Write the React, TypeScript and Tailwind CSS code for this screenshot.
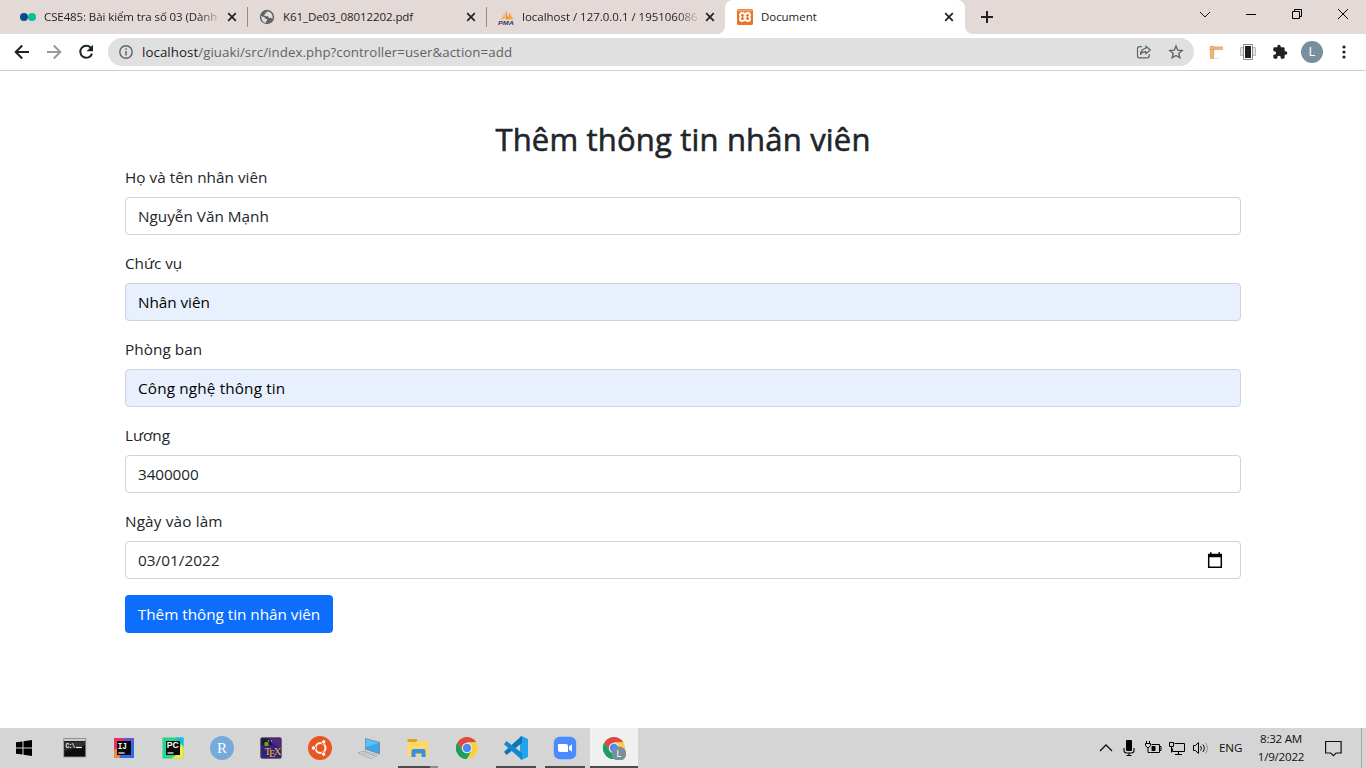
import type { ReactNode } from "react";

const ui = "font-['Open_Sans','Noto_Sans',sans-serif]";

/* ---------- Browser icons ---------- */

function CloseIcon() {
  return (
    <svg width="10" height="10" viewBox="0 0 10 10" className="shrink-0">
      <path d="M1.2 1.2 8.8 8.8M8.8 1.2 1.2 8.8" stroke="#202124" strokeWidth="1.7" />
    </svg>
  );
}

function DotsFavicon() {
  return (
    <svg width="16" height="16" viewBox="0 0 16 16">
      <circle cx="4" cy="8" r="4" fill="#0b4a8f" />
      <circle cx="12" cy="8" r="4" fill="#08bf96" />
    </svg>
  );
}

function GlobeFavicon() {
  return (
    <svg width="16" height="16" viewBox="0 0 16 16">
      <circle cx="8" cy="8" r="7.2" fill="#5f6368" />
      <path d="M2.300 7 5.500 8.200l1 1.500 1.800.6-.3 1.400-1 .8v1.500A6 6 0 0 1 2.300 7ZM8.500 2.200c-.2 1-.8 1.200-1.500 1.400-.8.3-.8.900-.5 1.400L5.300 5.600l.2 1.500 3.300.2 1.400 1.600h1.900l1.400 1A6 6 0 0 0 8.500 2.200Z" fill="#e3dad8" />
    </svg>
  );
}

function PmaFavicon() {
  return (
    <svg width="16" height="16" viewBox="0 0 16 16">
      <path d="M6.500 1.500C6.600 5 5 8.500 1.500 10.500L7 10Z" fill="#f7b267" />
      <path d="M9 .5C7.500 4.500 7.200 7.500 8 10.500l3-.5C9 7 8.500 4 9 .5Z" fill="#f29222" />
      <path d="M11 2c1 3.500 2.500 6 4.500 8L9 10.500C11 8 11.500 5 11 2Z" fill="#f6a13c" />
      <text x="0" y="15.800" textLength="16" lengthAdjust="spacingAndGlyphs" fontFamily="Liberation Sans" fontSize="5.800" fontWeight="700" fontStyle="italic" fill="#34346a">PMA</text>
    </svg>
  );
}

function XamppFavicon() {
  return (
    <svg width="16" height="16" viewBox="0 0 16 16">
      <rect width="16" height="16" rx="1.500" fill="#ec7323" />
      <rect x=".5" y=".5" width="15" height="2" fill="#f2a170" />
      <path d="M8 6.300C7.500 4.600 6.500 4 5.200 4 3.700 4 3 5 3 6.200c0 .8.500 1.300 1 1.800-.6.500-1 1-1 1.900C3 11.200 3.800 12 5.200 12c1.400 0 2.300-.7 2.800-2.200.5 1.500 1.400 2.200 2.800 2.200 1.400 0 2.200-.8 2.200-2.100 0-.9-.4-1.400-1-1.900.5-.5 1-1 1-1.800C13 5 12.300 4 10.800 4 9.500 4 8.500 4.600 8 6.300ZM6.300 8h3.400" fill="none" stroke="#fff" strokeWidth="1.900" strokeLinejoin="round" />
    </svg>
  );
}

/* ---------- Tabs ---------- */

function Tab({ icon, title, spacing, active = false }: { icon: ReactNode; title: string; spacing: string; active?: boolean }) {
  return (
    <div
      className={
        active
          ? "relative flex h-[34px] w-[240px] shrink-0 items-center rounded-t-[8px] bg-white pr-[11px] pl-3"
          : "flex h-[34px] w-[239px] shrink-0 items-center pr-[10px] pl-3"
      }
    >
      {icon}
      <div
        className={`ml-2 w-[176px] text-[11.5px] leading-4 whitespace-nowrap text-[#1d1d1f] ${spacing} ${
          title.length > 22 ? "[mask-image:linear-gradient(to_right,black_155px,transparent_178px)]" : ""
        }`}
      >
        {title}
      </div>
      <div className="ml-auto flex w-[10px]">
        <CloseIcon />
      </div>
      {active && (
        <>
          <svg width="8" height="8" className="absolute bottom-0 -left-2">
            <path d="M8 0v8H0a8 8 0 0 0 8-8Z" fill="#fff" />
          </svg>
          <svg width="8" height="8" className="absolute -right-2 bottom-0">
            <path d="M0 0v8h8a8 8 0 0 1-8-8Z" fill="#fff" />
          </svg>
        </>
      )}
    </div>
  );
}

function Separator() {
  return <div className="-mr-px h-5 w-px shrink-0 bg-[#918c8b]" />;
}

function TabStrip() {
  return (
    <div className="flex h-[34px] items-center bg-[#e3dad8] pl-2">
      <Tab icon={<DotsFavicon />} title="CSE485: Bài kiểm tra số 03 (Dành" spacing="tracking-[-0.100px]" />
      <Separator />
      <Tab icon={<GlobeFavicon />} title="K61_De03_08012202.pdf" spacing="tracking-[-0.080px]" />
      <Separator />
      <Tab icon={<PmaFavicon />} title="localhost / 127.0.0.1 / 195106086" spacing="tracking-[-0.020px]" />
      <Tab icon={<XamppFavicon />} title="Document" spacing="tracking-[-0.050px]" active />
      <svg width="12" height="12" viewBox="0 0 12 12" className="ml-4">
        <path d="M6 0v12M0 6h12" stroke="#202124" strokeWidth="2" />
      </svg>
      <div className="mb-[6px] ml-auto flex items-center">
        <svg width="46" height="28" viewBox="0 0 46 28" fill="none" stroke="#111">
          <path d="m18 12 5 5 5-5" />
        </svg>
        <svg width="46" height="28" viewBox="0 0 46 28" fill="none" stroke="#000">
          <path d="M18 14.500h10" />
        </svg>
        <svg width="46" height="28" viewBox="0 0 46 28" fill="none" stroke="#000">
          <path d="M18.500 11.500h7v7h-7zM20.500 11.500v-2h7v7h-2" />
        </svg>
        <svg width="46" height="28" viewBox="0 0 46 28" fill="none" stroke="#000">
          <path d="m18 9 10 10m0-10L18 19" />
        </svg>
      </div>
    </div>
  );
}

/* ---------- Toolbar ---------- */

function Toolbar() {
  return (
    <div className="flex h-[37px] items-center border-b border-[#cdcdcd] bg-white pl-[14px]">
      <svg width="16" height="16" viewBox="0 0 16 16" fill="none" stroke="#202124" strokeWidth="2">
        <path d="M15 8H2.500M8.200 1.500 1.700 8l6.500 6.500" />
      </svg>
      <svg width="16" height="16" viewBox="0 0 16 16" fill="none" stroke="#9a9a9c" strokeWidth="2" className="ml-4">
        <path d="M1 8h12.500M7.800 1.500 14.300 8l-6.500 6.500" />
      </svg>
      <svg width="16" height="16" viewBox="0 0 16 16" className="ml-4">
        <path d="M13.200 4.300A6 6 0 1 0 14 9.600" fill="none" stroke="#202124" strokeWidth="2" />
        <path d="M15 .8v6.400H8.600Z" fill="#202124" />
      </svg>
      <div className="ml-[14px] flex h-7 w-[1086px] items-center rounded-full bg-[#e0e0e0] pr-[10px] pl-[11px]">
        <svg width="14" height="14" viewBox="0 0 14 14" fill="none" stroke="#5f6368">
          <circle cx="7" cy="7" r="6.200" strokeWidth="1.400" />
          <path d="M7 6v4.500M7 3.300v1.500" strokeWidth="1.500" />
        </svg>
        <div className="ml-[9px] text-[13.300px] leading-5 tracking-[0.055px] text-[#5f6368]">
          <span className="text-[#202124]">localhost</span>/giuaki/src/index.php?controller=user&amp;action=add
        </div>
        <svg width="16" height="16" viewBox="0 0 16 16" fill="none" stroke="#5f6368" strokeWidth="1.200" strokeLinejoin="round" className="ml-auto">
          <path d="M6 2.700H3.500a2 2 0 0 0-2 2v7.100a2 2 0 0 0 2 2h7.800a2 2 0 0 0 2-2v-1.500" />
          <path d="M9.800 2.200 14.400 6l-4.600 3.800V7.700C7.400 7.600 5.700 8.500 4.500 10.500c.2-3.400 2-5.700 5.300-6.200Z" />
        </svg>
        <svg width="16" height="16" viewBox="0 0 16 16" fill="none" stroke="#5f6368" strokeWidth="1.400" className="ml-4">
          <path d="m8 2.100 1.700 4.100 4.400.4-3.300 2.900 1 4.300L8 11.500l-3.800 2.300 1-4.300-3.300-2.900 4.400-.4Z" />
        </svg>
      </div>
      <svg width="16" height="16" viewBox="0 0 16 16" className="ml-[14px]">
        <path d="M2.300 3.500h3.400v11H2.300z" fill="#f3b56e" stroke="#d89550" strokeWidth=".6" />
        <path d="M2.500 2.900h12v2.600h-12z" fill="#f3b878" stroke="#d89550" strokeWidth=".6" />
        <circle cx="4" cy="4" r="1.900" fill="#f9c991" stroke="#d08b45" strokeWidth=".7" />
        <path d="M5.800 14.500h5" stroke="#ddd" />
      </svg>
      <svg width="16" height="16" viewBox="0 0 16 16" className="ml-4">
        <path d="M.5 3.500h15v8H.5z" fill="#e7e7e7" stroke="#bdbdbd" />
        <path d="M3.500.5h9v15h-9z" fill="#fff" stroke="#8a8a8a" />
        <path d="M5 2h6v12H5z" fill="#1a1f2a" />
      </svg>
      <svg width="16" height="16" viewBox="0 0 24 24" className="ml-4" fill="#202124">
        <path d="M20.500 11H19V7a2 2 0 0 0-2-2h-4V3.500a2.500 2.500 0 0 0-5 0V5H4a2 2 0 0 0-2 2v3.800h1.500a2.700 2.700 0 0 1 0 5.400H2V20a2 2 0 0 0 2 2h3.800v-1.500a2.700 2.700 0 0 1 5.400 0V22H17a2 2 0 0 0 2-2v-4h1.500a2.500 2.500 0 0 0 0-5Z" />
      </svg>
      <div className="ml-[13px] flex size-[22px] items-center justify-center rounded-full bg-[#78909c] font-[Roboto,sans-serif] text-[12px] leading-none text-white">L</div>
      <svg width="4" height="14" viewBox="0 0 4 14" fill="#202124" className="ml-[19px]">
        <circle cx="2" cy="2" r="1.600" />
        <circle cx="2" cy="7" r="1.600" />
        <circle cx="2" cy="12" r="1.600" />
      </svg>
    </div>
  );
}

/* ---------- Form ---------- */

type FieldProps = {
  label: string;
  labelSpacing: string;
  value: string;
  spacing: string;
  filled?: boolean;
  date?: boolean;
};

function Field({ label, labelSpacing, value, spacing, filled = false, date = false }: FieldProps) {
  return (
    <div className="mb-4">
      <label className={`mb-2 block h-6 text-[15.300px] leading-6 ${labelSpacing}`}>{label}</label>
      <div
        className={`flex h-[38px] items-center justify-between rounded border border-[#ced4da] px-3 text-[15.300px] leading-6 ${
          filled ? "bg-[#e8f0fe] text-black" : "bg-white"
        }`}
      >
        <span className={spacing}>{value}</span>
        {date && (
          <svg width="16" height="18" viewBox="0 0 16 18" className="mr-[5px]">
            <path d="M1.700 3.500h12.600v12.800H1.700z" fill="none" stroke="#000" strokeWidth="1.500" />
            <path d="M1 3h14v3.200H1zM3 1.300h1.500v2H3zM11.500 1.300H13v2h-1.500z" fill="#000" />
          </svg>
        )}
      </div>
    </div>
  );
}

function Page() {
  return (
    <main className="flex-1 bg-white px-[125px] pt-12 text-[#212529]">
      <h1 className="mb-2 h-[38.400px] pt-px text-center text-[31px] leading-[38.400px] font-medium tracking-[0.180px] [-webkit-text-stroke:0.600px_#212529]">
        Thêm thông tin nhân viên
      </h1>
      <Field label="Họ và tên nhân viên" labelSpacing="tracking-[0.020px]" value="Nguyễn Văn Mạnh" spacing="tracking-[0px]" />
      <Field label="Chức vụ" labelSpacing="tracking-[-0.050px]" value="Nhân viên" spacing="tracking-[-0.050px]" filled />
      <Field label="Phòng ban" labelSpacing="tracking-[0.060px]" value="Công nghệ thông tin" spacing="tracking-[0.150px]" filled />
      <Field label="Lương" labelSpacing="tracking-[-0.050px]" value="3400000" spacing="tracking-[-0.100px]" />
      <Field label="Ngày vào làm" labelSpacing="tracking-[0.150px]" value="03/01/2022" spacing="tracking-[0.050px]" date />
      <button className="flex h-[38px] w-[208px] items-center justify-center rounded bg-[#0d6efd] text-[15.300px] leading-6 tracking-[-0.030px] whitespace-nowrap text-white">
        Thêm thông tin nhân viên
      </button>
    </main>
  );
}

/* ---------- Taskbar ---------- */

function ChromeLogo() {
  return (
    <>
      <circle cx="12" cy="12" r="11" fill="#fff" />
      <path d="M12 12 2.470 6.500A11 11 0 0 1 21.530 6.500L12 6.500Z" fill="#dd4b3e" />
      <path d="M2.470 6.500A11 11 0 0 0 12 23L16.760 14.750 12 12 7.240 14.750Z" fill="#1da05e" />
      <path d="M2.470 6.500 7.240 14.750 12 12V6.500Z" fill="#dd4b3e" />
      <path d="M2.470 6.500 7.240 14.750 8 17 12 23A11 11 0 0 1 2.470 6.500Z" fill="#1da05e" />
      <path d="M21.530 6.500A11 11 0 0 1 12 23l4.760-8.250L12 6.500Z" fill="#ffcd41" />
      <circle cx="12" cy="12" r="5.200" fill="#f1f1f1" />
      <circle cx="12" cy="12" r="4.200" fill="#4a8af4" />
    </>
  );
}

function Slot({ children, state = "idle" }: { children: ReactNode; state?: "idle" | "open" | "multi" | "active" }) {
  return (
    <div className="flex h-10 w-[49px] shrink-0 flex-col items-center">
      <div className={`flex h-[38px] w-12 items-center justify-center pt-[2px] ${state === "active" ? "bg-[#f0f0f0]" : ""}`}>
        <svg width="24" height="24" viewBox="0 0 24 24">
          {children}
        </svg>
      </div>
      {state === "open" && <div className="h-[2px] w-10 bg-[#4b4b4b]" />}
      {state === "active" && <div className="h-[2px] w-12 bg-[#4b4b4b]" />}
      {state === "multi" && (
        <div className="flex h-[2px] w-10">
          <div className="w-8 bg-[#4b4b4b]" />
          <div className="w-2 bg-[#8c8c8c]" />
        </div>
      )}
    </div>
  );
}

function Taskbar() {
  return (
    <footer className="flex h-10 shrink-0 bg-[#d5d5d5] pl-px">
      <Slot>
        <path d="M2 6.300 8.500 5.400v6.100H2zM9.500 5.200 18 4v7.500H9.500zM2 12.500h6.500v6.100L2 17.700zM9.500 12.500H18V20l-8.500-1.200z" fill="#000" />
      </Slot>
      <Slot>
        <rect x=".8" y="2.500" width="22" height="18.500" fill="#0c0c0c" stroke="#9a9a9a" strokeWidth=".8" />
        <path d="M1 3h21.500v2H1z" fill="#c7ccd0" />
        <path d="M1.500 5.500h20.500v4L1.500 15z" fill="#303030" />
        <text x="2.500" y="11.500" textLength="10" fontFamily="Liberation Mono" fontSize="6.500" fontWeight="700" fill="#eee">C:\</text>
        <path d="M13 11.500h6" stroke="#eee" strokeWidth="1.200" />
      </Slot>
      <Slot>
        <path d="M2 2h20v20H2z" fill="#286cf0" />
        <path d="M2 2h10L8 22H2z" fill="#f22b65" />
        <path d="m2 14 4-2 2 10H2z" fill="#f08a3c" />
        <path d="M12 2h10v5L12 8z" fill="#6557d9" />
        <path d="M5 5h14v14H5z" fill="#090909" />
        <text x="5.700" y="12.500" textLength="9" lengthAdjust="spacingAndGlyphs" fontFamily="Liberation Mono" fontSize="9" fontWeight="700" fill="#fff">IJ</text>
        <path d="M6.500 17h6" stroke="#fff" strokeWidth="1.200" />
      </Slot>
      <Slot>
        <path d="M1.500 1.500h21v21h-21z" fill="#21d789" />
        <path d="M15 1.500h7.500v8L17 7z" fill="#13bde3" />
        <path d="M20 7.500 22.500 12v10.500H10L17 18z" fill="#f1ed3c" />
        <path d="M5 5h14v14H5z" fill="#090909" />
        <text x="5.700" y="12.300" textLength="12" lengthAdjust="spacingAndGlyphs" fontFamily="Liberation Sans" fontSize="9" fontWeight="700" fill="#fff">PC</text>
        <path d="M6.500 17h6" stroke="#fff" strokeWidth="1.200" />
      </Slot>
      <Slot>
        <circle cx="12" cy="12" r="12" fill="#75aadb" />
        <text x="12" y="17" textAnchor="middle" fontFamily="Liberation Serif" fontSize="15" fill="#fff">R</text>
      </Slot>
      <Slot>
        <rect x="1.800" y="1.800" width="20.400" height="20.400" rx="1" fill="#302080" stroke="#53455f" />
        <path d="M8 2.500h13.500V12L15 8Z" fill="#4e2a78" />
        <path d="M2.500 3h8l3 6h-11z" fill="#191a28" />
        <circle cx="7.500" cy="8" r="2.300" fill="#779e1b" />
        <path d="m9 4 .8 1.500M12 5h1" stroke="#ddd" />
        <g fontFamily="Liberation Serif" fontSize="10.500" fill="#e9bd2d">
          <text x="5.500" y="18.500">T</text>
          <text x="10" y="21">E</text>
          <text x="14.700" y="18.500">X</text>
        </g>
      </Slot>
      <Slot>
        <circle cx="12" cy="12" r="12" fill="#e95420" />
        <circle cx="12.500" cy="12" r="5" fill="none" stroke="#fff" strokeWidth="2" />
        <g fill="#fff" stroke="#e95420" strokeWidth=".9">
          <circle cx="5.500" cy="12" r="2.200" />
          <circle cx="15.700" cy="5.900" r="2.200" />
          <circle cx="15.700" cy="18.100" r="2.200" />
        </g>
      </Slot>
      <Slot>
        <path d="m8 2 15 4v12.500L8 13.500Z" fill="#7b8b96" />
        <path d="m8.800 3 13.200 3.700v10.400L8.800 12.800Z" fill="#39a9ed" />
        <path d="m8.800 3 13.200 3.700L8.800 11Z" fill="#5dc0f8" />
        <path d="m1 17 5.500-2L20 19.500l-6 3Z" fill="#dfe5e8" stroke="#8e9ba3" strokeWidth=".7" />
        <path d="m3.500 16.800 11 4m-8.500-5 11 4M9 15.500l-4 2m7-1-4 2m7-1-4 2m7-1-4 2" stroke="#9ba8b0" strokeWidth=".6" />
      </Slot>
      <Slot state="multi">
        <path d="M1.500 4.500A1.500 1.500 0 0 1 3 3h7.500l2 2H21a1.500 1.500 0 0 1 1.500 1.500V20h-21z" fill="#ffd76b" />
        <path d="M1.500 4.500A1.500 1.500 0 0 1 3 3h7.500l1 2-2 1h-8z" fill="#dda022" />
        <path d="M5.500 21v-6a2 2 0 0 1 2-2h10a2 2 0 0 1 2 2v6h-4v-3.500h-6V21z" fill="#3294dc" />
      </Slot>
      <Slot>
        <ChromeLogo />
      </Slot>
      <Slot state="open">
        <path d="M17.500 0 24 3v18l-6.500 3L16 22.500v-21Z" fill="#22a4eb" />
        <path d="M17.500 0 0 15.800 2.500 19 18 7V1Z" fill="#0876b9" />
        <path d="M0 8.200 2.500 5 18 17v6.500h-.5Z" fill="#1288cf" />
      </Slot>
      <Slot state="open">
        <rect x=".8" y=".8" width="22.400" height="22.400" rx="6" fill="#4a8cff" />
        <path d="M5 8h8a2 2 0 0 1 2 2v6H7a2 2 0 0 1-2-2zM16 10.500 19 8.300v7.400l-3-2.200z" fill="#fff" />
      </Slot>
      <Slot state="active">
        <ChromeLogo />
        <circle cx="17" cy="17.700" r="7.300" fill="#78909c" />
        <text x="17" y="21" textAnchor="middle" fontFamily="Roboto" fontSize="9" fill="#fff">L</text>
      </Slot>

      <div className="ml-auto flex items-center text-[#111]">
        <svg width="14" height="20" viewBox="0 0 14 20" fill="none" stroke="#111" strokeWidth="1.300">
          <path d="m1 13 6-6 6 6" />
        </svg>
        <svg width="12" height="20" viewBox="0 0 12 20" className="ml-[10px]">
          <rect x="3" y="2" width="6" height="11" rx="1" fill="#000" />
          <path d="M1 10v2.500c0 1.500 1 2.500 2.500 2.500h5c1.500 0 2.500-1 2.500-2.500V10M6 15v3M3.500 17.500h5" fill="none" stroke="#000" strokeWidth="1.100" />
        </svg>
        <svg width="17" height="20" viewBox="0 0 17 20" fill="none" stroke="#000" className="ml-[10px]">
          <path d="M6.500 6.500h8v8h-9M14.500 8.500h1.500v4h-1.500M1.500 3v2M4.500 3v2M.500 5.500h5v2l-1.500 2H2l-1.500-2zM3 9.500v5h2.500" />
          <path d="M7 8.500h3v4H7z" fill="#000" />
        </svg>
        <svg width="17" height="20" viewBox="0 0 17 20" fill="none" stroke="#000" className="ml-[7px]">
          <path d="M5.500 5.500h10v8h-12v-3M9.500 13.500v3M6 16.500h7M.500 4.500h4v4h-4zM2.500 8.500v6" />
        </svg>
        <svg width="17" height="20" viewBox="0 0 17 20" fill="none" stroke="#000" className="ml-[6px]">
          <path d="M1.500 7.500h2l3-3v11l-3-3h-2z" />
          <path d="M8.500 8c1 1.500 1 3 0 4.500M10.800 6.500c2 2.500 2 5 0 7.500" />
          <path d="M13.500 5c2.500 3.500 2.500 7 0 10.500" stroke="#8c8c8c" />
        </svg>
        <div className="ml-[10px] w-[24px] text-[11.600px] tracking-[-0.100px]">ENG</div>
        <div className="ml-[10px] w-[56px] text-center text-[11.600px] leading-[18px] tracking-[-0.250px] whitespace-nowrap">
          <div>8:32 AM</div>
          <div>1/9/2022</div>
        </div>
        <svg width="17" height="20" viewBox="0 0 17 20" fill="none" stroke="#111" strokeWidth="1.200" className="ml-[16px]">
          <path d="M.600 3.500h15.500v11.500h-5L8.400 17.700 5.700 15H.600z" />
        </svg>
        <div className="ml-[19px] h-10 w-px bg-[#a8a8a8]" />
        <div className="w-1" />
      </div>
    </footer>
  );
}

export default function App() {
  return (
    <div className={`flex h-[768px] w-[1366px] flex-col overflow-hidden bg-white ${ui}`}>
      <TabStrip />
      <Toolbar />
      <Page />
      <Taskbar />
    </div>
  );
}
